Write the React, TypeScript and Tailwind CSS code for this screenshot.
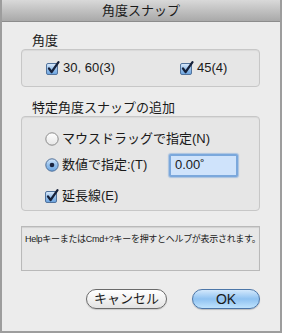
import type { ReactNode } from "react";

const font = {
  fontFamily: '"Liberation Sans", "Noto Sans CJK JP", sans-serif',
};

function CheckBox() {
  return (
    <svg width="14" height="14" viewBox="0 0 14 14" className="shrink-0">
      <defs>
        <linearGradient id="cbFill" x1="0" y1="0" x2="0" y2="1">
          <stop offset="0" stopColor="#dcebfb" />
          <stop offset="0.5" stopColor="#99c2ec" />
          <stop offset="1" stopColor="#6aa2de" />
        </linearGradient>
      </defs>
      <rect
        x="0.5"
        y="2.5"
        width="11"
        height="11"
        rx="1.5"
        fill="url(#cbFill)"
        stroke="#52739c"
      />
      <path
        d="M3 7.5 L5.6 11 L12.5 1.2"
        fill="none"
        stroke="#16213a"
        strokeWidth="2.2"
        strokeLinecap="round"
        strokeLinejoin="round"
      />
    </svg>
  );
}

function Radio({ checked }: { checked?: boolean }) {
  return (
    <svg width="14" height="14" viewBox="0 0 14 14" className="shrink-0">
      <defs>
        <linearGradient id="rOff" x1="0" y1="0" x2="0" y2="1">
          <stop offset="0" stopColor="#ffffff" />
          <stop offset="1" stopColor="#e6e6e6" />
        </linearGradient>
        <linearGradient id="rOn" x1="0" y1="0" x2="0" y2="1">
          <stop offset="0" stopColor="#d8e9fb" />
          <stop offset="0.5" stopColor="#94c0ec" />
          <stop offset="1" stopColor="#6aa3df" />
        </linearGradient>
      </defs>
      <circle
        cx="7"
        cy="7"
        r="6.2"
        fill={checked ? "url(#rOn)" : "url(#rOff)"}
        stroke={checked ? "#4f6f98" : "#8a8a8a"}
      />
      {checked && <circle cx="7" cy="7" r="2.3" fill="#1b2540" />}
    </svg>
  );
}

function GroupBox({
  className,
  children,
}: {
  className?: string;
  children: ReactNode;
}) {
  return (
    <div
      className={`rounded-[4px] border border-[#c7c7c7] bg-[#e6e6e6] shadow-[inset_0_1px_1px_rgba(0,0,0,0.06)] ${className ?? ""}`}
    >
      {children}
    </div>
  );
}

export default function App() {
  return (
    <div
      style={font}
      className="flex h-[333px] w-[282px] flex-col border-x-2 border-b-2 border-[#9d9d9d] bg-[#ececec] text-[13px] leading-[16px] text-[#1a1a1a]"
    >
      <div className="flex h-[22px] shrink-0 items-center justify-center border-b border-[#8c8c8c] bg-gradient-to-b from-[#d9d9d9] to-[#a9a9a9] text-[13px]">
        角度スナップ
      </div>

      <div className="flex flex-col pl-[19px] pr-[20px]">
        <div className="mt-[11px] pl-[11px]">角度</div>
        <GroupBox className="flex h-[38px] items-center">
          <div className="flex w-[134px] items-center gap-[3px] pl-[24px]">
            <CheckBox />
            <span>30, 60(3)</span>
          </div>
          <div className="flex items-center gap-[3px] pl-[24px]">
            <CheckBox />
            <span>45(4)</span>
          </div>
        </GroupBox>

        <div className="mt-[13px] pl-[11px]">特定角度スナップの追加</div>
        <GroupBox className="flex h-[95px] flex-col pl-[23px] pt-[14px]">
          <div className="flex h-[16px] items-center gap-[3px]">
            <Radio />
            <span>マウスドラッグで指定(N)</span>
          </div>
          <div className="mt-[7px] flex h-[22px] items-center">
            <div className="flex w-[124px] items-center gap-[3px]">
              <Radio checked />
              <span>数値で指定:(T)</span>
            </div>
            <div className="flex h-[23px] w-[69px] items-center rounded-[2px] border-2 border-[#7ba8dc] bg-[#cfe3fb] pl-[4px] shadow-[0_0_1px_1px_rgba(110,160,220,0.5)]">
              0.00˚
            </div>
          </div>
          <div className="mt-[12px] flex h-[16px] items-center gap-[3px]">
            <CheckBox />
            <span>延長線(E)</span>
          </div>
        </GroupBox>

        <div className="mt-[15px] h-[45px] border border-[#b9b9b9] bg-[#e7e7e7] px-[3px] pt-[6px] text-[9px] leading-[12px] tracking-[-0.3px] whitespace-nowrap shadow-[inset_0_1px_1px_rgba(0,0,0,0.1)]">
          HelpキーまたはCmd+?キーを押すとヘルプが表示されます。
        </div>

        <div className="mt-[18px] flex justify-end gap-[25px]">
          <button className="flex h-[20px] w-[81px] items-center justify-center rounded-full border border-[#6a6a6a] bg-gradient-to-b from-[#ffffff] via-[#f2f2f2] to-[#e2e2e2] text-[13px] shadow-[0_1px_1px_rgba(0,0,0,0.15)]">
            キャンセル
          </button>
          <button className="flex h-[20px] w-[68px] items-center justify-center rounded-full border border-[#4c76a8] bg-gradient-to-b from-[#d2e8fc] via-[#8fc2f1] to-[#bfe3fd] text-[14px] shadow-[0_1px_1px_rgba(0,0,0,0.2)]">
            OK
          </button>
        </div>
      </div>
    </div>
  );
}
